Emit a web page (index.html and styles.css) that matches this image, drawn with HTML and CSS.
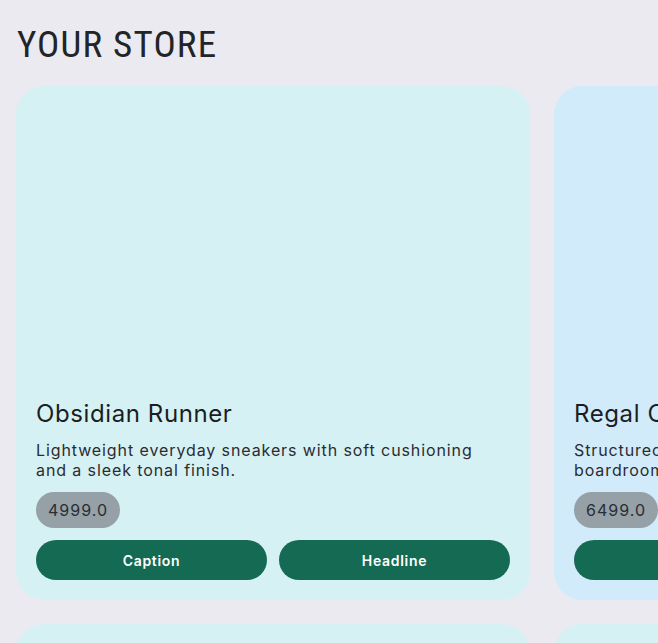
FILE: index.html
```html
<!DOCTYPE html>
<html>
<head>
<meta charset="utf-8">
<link rel="stylesheet" href="styles.css">
</head>
<body>
<main class="page">
  <h1 class="title">YOUR STORE</h1>
  <section class="grid">
    <article class="card card-teal">
      <h2 class="card-title">Obsidian Runner</h2>
      <p class="card-desc">Lightweight everyday sneakers with soft cushioning and a sleek tonal finish.</p>
      <span class="price">4999.0</span>
      <div class="actions">
        <button class="btn">Caption</button>
        <button class="btn">Headline</button>
      </div>
    </article>
    <article class="card card-blue">
      <h2 class="card-title">Regal Classic</h2>
      <p class="card-desc">Structured leather oxfords with a polished finish for boardroom days.</p>
      <span class="price">6499.0</span>
      <div class="actions">
        <button class="btn">Caption</button>
        <button class="btn">Headline</button>
      </div>
    </article>
    <article class="card card-teal"></article>
    <article class="card card-teal"></article>
  </section>
</main>
</body>
</html>
```
FILE: styles.css
```css
html, body {
  margin: 0;
  padding: 0;
  background: #eaeaf0;
  overflow: hidden;
}
.page {
  padding: 16px 16px 0 16px;
  font-family: Inter, "Noto Sans", sans-serif;
}
.title {
  margin: 4px 0 0 1px;
  height: 66px;
  font-family: "Liberation Sans Narrow", "Roboto", sans-serif;
  font-stretch: condensed;
  font-weight: 400;
  font-size: 37px;
  line-height: 50px;
  letter-spacing: 1.2px;
  color: #222428;
}
.grid {
  display: grid;
  grid-template-columns: 514px 514px;
  grid-auto-rows: 514px;
  gap: 24px;
}
.card {
  border-radius: 28px;
  padding: 20px;
  box-sizing: border-box;
  display: flex;
  flex-direction: column;
  justify-content: flex-end;
  align-items: flex-start;
  overflow: hidden;
}
.card-teal { background: #d6f1f4; }
.card-blue { background: #d1ebfa; }
.card-title {
  margin: 0 0 11px 0;
  font-size: 24px;
  line-height: 30px;
  font-weight: 400;
  letter-spacing: 0.6px;
  color: #1c1d1f;
  white-space: nowrap;
}
.card-desc {
  margin: 0 0 12px 0;
  font-size: 16px;
  line-height: 20px;
  letter-spacing: 0.9px;
  color: #2a2c30;
  width: 450px;
}
.price {
  display: inline-block;
  background: #95a0a7;
  border-radius: 18px;
  height: 36px;
  line-height: 36px;
  padding: 0 12px;
  font-size: 16px;
  letter-spacing: 1px;
  color: #2a2d33;
  margin-bottom: 12px;
}
.actions {
  display: flex;
  gap: 12px;
  width: 100%;
}
.btn {
  flex: 1;
  height: 40px;
  border: none;
  border-radius: 20px;
  background: #146a52;
  color: #ffffff;
  font-family: Inter, "Noto Sans", sans-serif;
  font-weight: 600;
  font-size: 14px;
  letter-spacing: 0.7px;
}
```
